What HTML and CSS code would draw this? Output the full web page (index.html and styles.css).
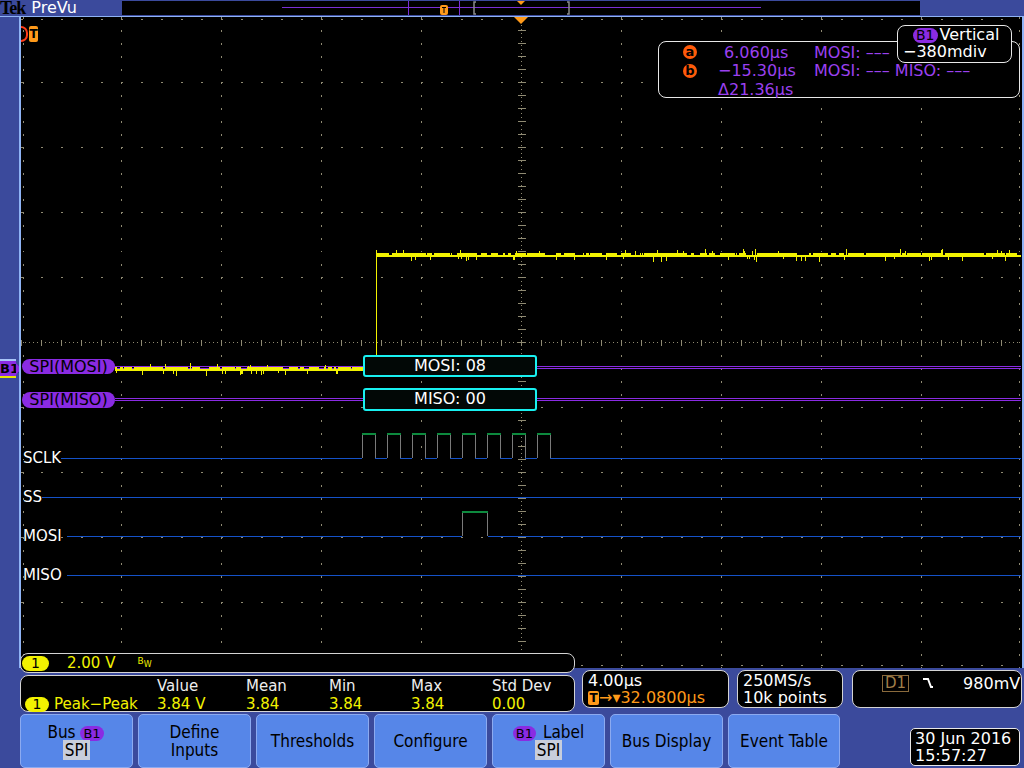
FILE: index.html
```html
<!DOCTYPE html>
<html>
<head>
    <meta charset="UTF-8">
    <title>Tek PreVu - SPI Bus</title>
    <link rel="stylesheet" href="styles.css">
</head>
<body>
<div class="scope">
    <div class="topbar">
        <div class="brand"><span class="tek">Tek</span><span class="mode">PreVu</span></div>
        <div class="record">
            <svg class="record-view" width="798" height="14" viewBox="122 1 798 14">
                <line x1="282" y1="7.5" x2="761" y2="7.5" stroke="#7a2fd6" stroke-width="1"/>
                <line x1="408.5" y1="1" x2="408.5" y2="15" stroke="#7a2fd6"/>
                <line x1="459.5" y1="1" x2="459.5" y2="15" stroke="#7a2fd6"/>
                <path d="M476 2H474V14H476 M567 2H569V14H567" fill="none" stroke="#8c8c8c" stroke-width="1.5"/>
                <rect x="440" y="5" width="8" height="10" rx="2" fill="#ff9a1a"/>
                <path d="M442 7.5H446 M444 7.5V13" stroke="#000" stroke-width="1"/>
                <polygon points="517,1 525,1 521,5" fill="#ff9a1a"/>
            </svg>
        </div>
    </div>

    <div class="display">
        <div class="strip"></div>
        <div class="bus-marker">B1</div>
        <div class="graticule">
            <svg class="traces" width="1001" height="651" viewBox="21 17 1001 651">
                <g class="grid">
                    <path class="dots-h" d="M21 19.5H1021 M21 82.5H1021 M21 147.5H1021 M21 212.5H1021 M21 277.5H1021 M21 407.5H1021 M21 472.5H1021 M21 537.5H1021 M21 602.5H1021 M21 665.5H1021"/>
                    <path class="dots-v" d="M23.5 17V668 M121.5 17V668 M221.5 17V668 M321.5 17V668 M421.5 17V668 M621.5 17V668 M721.5 17V668 M821.5 17V668 M921.5 17V668 M1019.5 17V668"/>
                    <path class="axis" d="M21 342.5H1021 M521.5 17V668"/>
                    <path class="ticks-h" d="M21 342.5H1021"/>
                    <path class="ticks-v" d="M521.5 17V668"/>
                </g>
                <g class="bus">
                    <path d="M115 366.5H1021 M115 368.5H1021 M115 398.5H1021 M115 400.5H1021"/>
                </g>
                <path id="ch1" class="ch1" d=""/>
                <g class="digital">
                    <path class="low" d="M61 458.5H362 M375 458.5H387 M400 458.5H412 M425 458.5H437 M450 458.5H462 M475 458.5H487 M500 458.5H512 M525 458.5H537 M550 458.5H1021 M42 497.5H1021 M67 536.5H462 M488 536.5H1021 M67 575.5H1021"/>
                    <path class="edge" d="M362.5 434V458 M375.5 434V458 M387.5 434V458 M400.5 434V458 M412.5 434V458 M425.5 434V458 M437.5 434V458 M450.5 434V458 M462.5 434V458 M475.5 434V458 M487.5 434V458 M500.5 434V458 M512.5 434V458 M525.5 434V458 M537.5 434V458 M550.5 434V458 M462.5 512V536 M487.5 512V536"/>
                    <path class="high" d="M362 434H376 M387 434H401 M412 434H426 M437 434H451 M462 434H476 M487 434H501 M512 434H526 M537 434H551 M462 512H488"/>
                </g>
            </svg>

            <div class="trig-pos"></div>
            <div class="trig-level"><span class="trig-arc"></span><span class="trig-t">T</span></div>

            <div class="cursors">
                <span class="cur-tag">a</span><span class="cur-val first">6.060µs</span><span>MOSI: –––</span>
                <span class="cur-tag">b</span><span class="cur-val">−15.30µs</span><span>MOSI: ––– MISO: –––</span>
                <span></span><span class="cur-val">Δ21.36µs</span><span></span>
            </div>
            <div class="vscale">
                <div class="vscale-top"><span class="badge">B1</span>Vertical</div>
                <div class="vscale-bottom">−380mdiv</div>
            </div>

            <div class="bus-label mosi">SPI(MOSI)</div>
            <div class="bus-label miso">SPI(MISO)</div>
            <div class="packet mosi">MOSI: 08</div>
            <div class="packet miso">MISO: 00</div>

            <div class="dlabel sclk">SCLK</div>
            <div class="dlabel ss">SS</div>
            <div class="dlabel dmosi">MOSI</div>
            <div class="dlabel dmiso">MISO</div>
        </div>
    </div>

    <div class="readouts">
        <div class="chan-col">
            <div class="panel ch1-panel">
                <span class="ch-pill">1</span>
                <span class="ch-scale">2.00 V</span>
                <span class="bw">B<sub>W</sub></span>
            </div>
            <div class="panel meas">
                <span></span><span class="hd">Value</span><span class="hd">Mean</span><span class="hd">Min</span><span class="hd">Max</span><span class="hd">Std Dev</span>
                <span class="meas-name"><span class="ch-pill small">1</span>Peak−Peak</span><span>3.84 V</span><span>3.84</span><span>3.84</span><span>3.84</span><span>0.00</span>
            </div>
        </div>
        <div class="panel info horiz">
            <div>4.00µs</div>
            <div class="orange"><span class="t-box">T</span>→▾32.0800µs</div>
        </div>
        <div class="panel info acq">
            <div>250MS/s</div>
            <div>10k points</div>
        </div>
        <div class="panel info trig">
            <span class="d1">D1</span>
            <svg class="edge-icon" width="14" height="14" viewBox="0 0 14 14"><path d="M1 3H6L9 11H11" fill="none" stroke="#fff" stroke-width="2"/></svg>
            <span class="trig-val">980mV</span>
        </div>
    </div>

    <div class="menu">
        <div class="softkey"><div>Bus <span class="badge">B1</span></div><div><span class="sel">SPI</span></div></div>
        <div class="softkey"><div>Define</div><div>Inputs</div></div>
        <div class="softkey"><div>Thresholds</div></div>
        <div class="softkey"><div>Configure</div></div>
        <div class="softkey"><div><span class="badge">B1</span> Label</div><div><span class="sel">SPI</span></div></div>
        <div class="softkey"><div>Bus Display</div></div>
        <div class="softkey"><div>Event Table</div></div>
        <div class="clock"><div>30 Jun 2016</div><div>15:57:27</div></div>
    </div>
</div>
<script src="script.js"></script>
</body>
</html>
```

FILE: styles.css
```css
body {
    margin: 0;
    width: 1024px;
    height: 768px;
    overflow: hidden;
    background-color: #3b4a9c;
    font-family: "DejaVu Sans", sans-serif;
    font-size: 16px;
    color: #fff;
}
.scope {
    width: 1024px;
    height: 768px;
}

/* top record bar */
.topbar {
    display: flex;
    height: 16px;
}
.brand {
    width: 122px;
    display: flex;
    align-items: center;
    white-space: nowrap;
}
.tek {
    font-family: "Liberation Serif", serif;
    font-weight: bold;
    font-size: 18px;
    line-height: 16px;
    color: #000;
    letter-spacing: -1px;
}
.mode {
    margin-left: 6px;
    font-size: 16px;
    line-height: 16px;
    color: #fff;
}
.record {
    width: 798px;
    height: 14px;
    margin-top: 1px;
    background-color: #000;
}
.record-view {
    display: block;
}

/* waveform display */
.display {
    position: relative;
    display: flex;
    height: 651px;
    border-top: 1px solid #8fb3f5;
}
.strip {
    width: 19px;
}
.graticule {
    position: relative;
    flex: 1;
    background-color: #000;
    border-left: 2px solid #8fb3f5;
    border-right: 2px solid #8fb3f5;
    overflow: hidden;
}
.traces {
    position: absolute;
    left: 0;
    top: 0;
    shape-rendering: crispEdges;
}
.grid path {
    fill: none;
    stroke: #8f8a72;
}
.dots-h {
    stroke-width: 1.5;
    stroke-dasharray: 1.5 18.5;
}
.dots-v {
    stroke-width: 1.5;
    stroke-dasharray: 1.5 11.5;
}
.axis {
    stroke-width: 1;
    stroke-dasharray: 1 3;
}
.ticks-h {
    stroke-width: 6;
    stroke-dasharray: 1 19;
}
.ticks-v {
    stroke-width: 8;
    stroke-dasharray: 1 12;
}
.bus path {
    fill: none;
    stroke: #8a2be2;
    stroke-width: 1;
}
.ch1 {
    fill: none;
    stroke: #f2f200;
    stroke-width: 1;
}
.digital path {
    fill: none;
}
.digital .low {
    stroke: #1552c8;
    stroke-width: 1.5;
}
.digital .high {
    stroke: #0d8a3e;
    stroke-width: 2.5;
}
.digital .edge {
    stroke: #7a7a7a;
    stroke-width: 1;
}

.bus-marker {
    position: absolute;
    left: 0;
    top: 342px;
    width: 16px;
    height: 15px;
    background-color: #8a2be2;
    border-top: 2px solid #a8c4f8;
    border-bottom: 2px solid #e8e800;
    color: #000;
    font-size: 13px;
    font-weight: bold;
    line-height: 15px;
    text-align: center;
}
.bus-marker::after {
    content: "";
    position: absolute;
    right: -5px;
    top: 2px;
    border-left: 5px solid #8a2be2;
    border-top: 6px solid transparent;
    border-bottom: 6px solid transparent;
}

.trig-pos {
    position: absolute;
    left: 493px;
    top: 0;
    border-top: 7px solid #ff9a1a;
    border-left: 7px solid transparent;
    border-right: 7px solid transparent;
}
.trig-level {
    position: absolute;
    left: 0;
    top: 9px;
    display: flex;
    align-items: center;
}
.trig-arc {
    width: 7px;
    height: 16px;
    border: 2px solid #ff3b1a;
    border-left: none;
    border-radius: 0 8px 8px 0;
    box-sizing: border-box;
}
.trig-t {
    margin-left: 1px;
    width: 9px;
    height: 16px;
    background-color: #ff9a1a;
    border-radius: 2px;
    color: #000;
    font-size: 12px;
    font-weight: bold;
    line-height: 16px;
    text-align: center;
}

/* cursor readout */
.cursors {
    position: absolute;
    left: 637px;
    top: 24px;
    width: 362px;
    height: 57px;
    box-sizing: border-box;
    padding: 1px 0 0 24px;
    border: 1px solid #e8e8e8;
    border-radius: 8px;
    background-color: #000;
    display: grid;
    grid-template-columns: 35px 96px auto;
    grid-auto-rows: 18.5px;
    align-items: center;
    color: #9b40f0;
    font-size: 16px;
    white-space: nowrap;
}
.cur-tag {
    width: 14px;
    height: 14px;
    border-radius: 50%;
    background-color: #ff5a0a;
    color: #000;
    font-size: 13px;
    font-weight: bold;
    line-height: 13px;
    text-align: center;
}
.cur-val.first {
    padding-left: 6px;
}
.vscale {
    position: absolute;
    left: 876px;
    top: 8px;
    width: 115px;
    height: 38px;
    box-sizing: border-box;
    border: 1px solid #e8e8e8;
    border-radius: 8px;
    background-color: #000;
    font-size: 16px;
    line-height: 17px;
}
.vscale-top {
    padding-left: 15px;
}
.vscale-bottom {
    padding-left: 5px;
}
.badge {
    display: inline-block;
    padding: 0 3px;
    margin-right: 2px;
    border-radius: 8px;
    background-color: #8a2be2;
    color: #000;
    font-size: 14px;
    line-height: 15px;
}

.bus-label {
    position: absolute;
    left: 1px;
    width: 93px;
    height: 15px;
    border-radius: 8px;
    background-color: #8a2be2;
    color: #000;
    font-size: 16px;
    line-height: 15px;
    text-align: center;
}
.bus-label.mosi { top: 342px; }
.bus-label.miso { top: 375px; height: 16px; line-height: 16px; }

.packet {
    position: absolute;
    left: 342px;
    width: 174px;
    height: 22px;
    box-sizing: border-box;
    border: 2px solid #18f0f0;
    border-radius: 3px;
    background-color: #020806;
    color: #fff;
    font-size: 16px;
    line-height: 18px;
    text-align: center;
}
.packet.mosi { top: 338px; }
.packet.miso { top: 371px; height: 23px; }

.dlabel {
    position: absolute;
    left: 2px;
    font-size: 15px;
    line-height: 16px;
}
.dlabel.sclk { top: 433px; }
.dlabel.ss { top: 472px; }
.dlabel.dmosi { top: 511px; }
.dlabel.dmiso { top: 550px; }

/* readouts */
.readouts {
    position: relative;
    display: flex;
    height: 60px;
    margin-top: -15px;
    padding-left: 20px;
}
.chan-col {
    width: 555px;
    display: flex;
    flex-direction: column;
    gap: 2px;
}
.panel {
    box-sizing: border-box;
    border: 1px solid #d4d4d4;
    border-radius: 8px;
    background-color: #000;
}
.ch1-panel {
    height: 20px;
    display: flex;
    align-items: center;
    color: #f2f200;
    font-size: 15px;
}
.ch-pill {
    display: inline-block;
    width: 27px;
    height: 15px;
    margin-left: 1px;
    border-radius: 8px;
    background-color: #f2f200;
    color: #000;
    font-size: 14px;
    line-height: 15px;
    text-align: center;
}
.ch-pill.small {
    width: 24px;
    margin: 0 5px 0 4px;
}
.ch-scale {
    margin-left: 18px;
}
.bw {
    margin-left: 22px;
    font-size: 9px;
    line-height: 9px;
}
.bw sub {
    font-size: 8px;
}
.meas {
    height: 37px;
    padding-top: 1px;
    display: grid;
    grid-template-columns: 136px 89px 83px 82px 81px auto;
    grid-auto-rows: 18px;
    align-items: center;
    color: #f2f200;
    font-size: 15px;
}
.meas .hd {
    color: #eee;
}
.meas-name {
    display: flex;
    align-items: center;
}
.info {
    margin-top: 17px;
    height: 38px;
    padding: 1px 0 0 5px;
    font-size: 16px;
    line-height: 17px;
}
.horiz {
    margin-left: 7px;
    width: 147px;
}
.acq {
    margin-left: 8px;
    width: 106px;
}
.trig {
    margin-left: 9px;
    width: 170px;
    display: flex;
    align-items: flex-start;
    padding-top: 4px;
}
.orange {
    color: #ff9a1a;
    display: flex;
    align-items: center;
}
.t-box {
    display: inline-block;
    width: 11px;
    height: 14px;
    border-radius: 2px;
    background-color: #ff9a1a;
    color: #000;
    font-size: 12px;
    font-weight: bold;
    line-height: 14px;
    text-align: center;
}
.d1 {
    margin-left: 24px;
    padding: 0 2px;
    border: 1px solid #8a6a3c;
    color: #a07e48;
    font-size: 15px;
    line-height: 15px;
}
.edge-icon {
    margin: 1px 0 0 13px;
}
.trig-val {
    margin-left: 27px;
}

/* softkeys */
.menu {
    display: flex;
    gap: 5px;
    height: 54px;
    padding: 1px 0 0 20px;
}
.softkey {
    width: 113px;
    height: 54px;
    box-sizing: border-box;
    border: 1px solid #8caaf0;
    border-radius: 5px;
    background-color: #5686e8;
    color: #000;
    font-family: "DejaVu Sans Condensed", "DejaVu Sans", sans-serif;
    font-size: 17px;
    line-height: 18px;
    display: flex;
    flex-direction: column;
    justify-content: center;
    align-items: center;
}
.softkey:nth-child(7) {
    width: 112px;
}
.softkey .badge {
    font-family: "DejaVu Sans", sans-serif;
    font-size: 13px;
}
.sel {
    padding: 0 2px;
    background-color: #c8cedc;
}
.clock {
    margin: 14px 4px 0 auto;
    width: 110px;
    height: 38px;
    box-sizing: border-box;
    padding: 1px 0 0 4px;
    border: 1px solid #e8e8e8;
    border-radius: 5px;
    background-color: #000;
    font-size: 16px;
    line-height: 17px;
}
```

FILE: script.js
```js
// channel 1 trace: two flat levels with acquisition noise
(function () {
    var seed = 12345;
    function rnd() {
        seed = (seed * 16807) % 2147483647;
        return seed / 2147483647;
    }

    function noisy(x0, x1, base) {
        var d = 'M' + x0 + ' ' + (base + 0.5) + 'H' + x1;
        var thick = true;
        for (var x = x0; x < x1; x++) {
            if (thick && rnd() < 0.08) thick = false;
            else if (!thick && rnd() < 0.3) thick = true;
            var px = x + 0.5;
            var top = thick ? base - 3 : base - 1;
            d += 'M' + px + ' ' + top + 'V' + (base + 1);
            var r = rnd();
            if (r < 0.06) d += 'M' + px + ' ' + base + 'V' + (base + 3 + Math.round(rnd() * 3));
            else if (r < 0.09) d += 'M' + px + ' ' + (base + 1) + 'V' + (base - 4 - Math.round(rnd() * 3));
        }
        return d;
    }

    var d = noisy(115, 376, 370);
    d += 'M376.5 370V250';
    d += noisy(377, 1021, 256);
    document.getElementById('ch1').setAttribute('d', d);
})();
```
